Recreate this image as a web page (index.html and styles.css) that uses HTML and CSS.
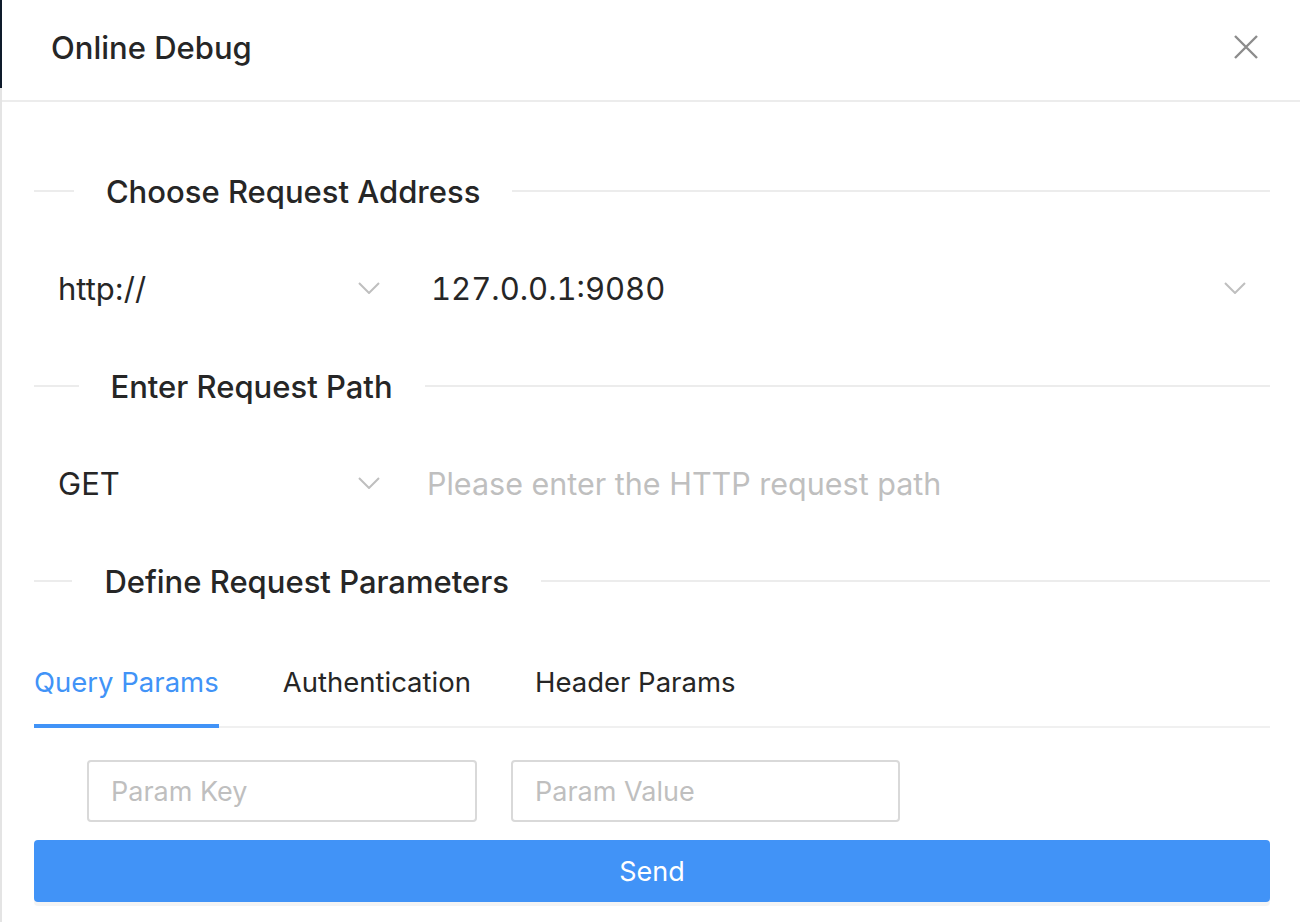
FILE: index.html
```html
<!DOCTYPE html>
<html lang="en">
<head>
<meta charset="utf-8">
<title>Online Debug</title>
<link rel="stylesheet" href="styles.css">
</head>
<body>
<div class="page">
  <div class="behind"><div class="behind-top"></div></div>
  <div class="drawer">
    <div class="drawer-header">
      <div class="drawer-title">Online Debug</div>
      <button class="close" aria-label="Close">
        <svg width="24" height="24" viewBox="0 0 24 24"><path d="M1 1 L23 23 M23 1 L1 23" stroke="#8c8c8c" stroke-width="2.4" fill="none"/></svg>
      </button>
    </div>
    <div class="drawer-body">
      <div class="divider first"><span class="divider-text">Choose Request Address</span></div>
      <div class="field-row">
        <div class="select narrow">
          <span class="select-value">http://</span>
          <svg class="chev" width="22" height="12" viewBox="0 0 22 12"><polyline points="1,1 11,11 21,1" fill="none" stroke="#bfbfbf" stroke-width="2"/></svg>
        </div>
        <div class="select wide">
          <span class="select-value nums">127.0.0.1:9080</span>
          <svg class="chev" width="22" height="12" viewBox="0 0 22 12"><polyline points="1,1 11,11 21,1" fill="none" stroke="#bfbfbf" stroke-width="2"/></svg>
        </div>
      </div>
      <div class="divider"><span class="divider-text">Enter Request Path</span></div>
      <div class="field-row">
        <div class="select narrow">
          <span class="select-value">GET</span>
          <svg class="chev" width="22" height="12" viewBox="0 0 22 12"><polyline points="1,1 11,11 21,1" fill="none" stroke="#bfbfbf" stroke-width="2"/></svg>
        </div>
        <input class="path-input" type="text" placeholder="Please enter the HTTP request path">
      </div>
      <div class="divider"><span class="divider-text">Define Request Parameters</span></div>
      <div class="tabs">
        <div class="tab active">Query Params</div>
        <div class="tab">Authentication</div>
        <div class="tab">Header Params</div>
      </div>
      <div class="params">
        <input class="param-input" type="text" placeholder="Param Key">
        <input class="param-input" type="text" placeholder="Param Value">
      </div>
      <button class="send">Send</button>
    </div>
  </div>
</div>
</body>
</html>
```
FILE: styles.css
```css
html, body {
  margin: 0;
  padding: 0;
  background: #fff;
}
body {
  font-family: "Inter", "Liberation Sans", sans-serif;
  color: #262626;
}
.page {
  display: flex;
  width: 1300px;
  height: 922px;
  overflow: hidden;
}
.behind {
  width: 2px;
  flex: none;
  background: #e4e4e4;
}
.behind-top {
  height: 88px;
  background: #0e1b2b;
}
.drawer {
  flex: 1;
  display: flex;
  flex-direction: column;
  background: #fff;
}
.drawer-header {
  box-sizing: border-box;
  height: 102px;
  border-bottom: 2px solid #ececec;
  display: flex;
  align-items: center;
  justify-content: space-between;
  padding: 0 42px 6px 49px;
}
.drawer-title {
  font-size: 31px;
  font-weight: 500;
  color: #262626;
}
.close {
  border: 0;
  background: none;
  padding: 0;
  width: 24px;
  height: 24px;
  display: flex;
}
.drawer-body {
  padding: 64px 30px 0 32px;
  display: flex;
  flex-direction: column;
}
.divider {
  display: flex;
  align-items: center;
  height: 50px;
  margin-top: 41px;
}
.divider.first {
  margin-top: 0;
}
.divider::before,
.divider::after {
  content: "";
  border-top: 2px solid #ececec;
  flex: 5 1 0;
}
.divider::after {
  flex: 95 1 0;
}
.divider-text {
  padding: 0 32px;
  font-size: 31px;
  font-weight: 500;
  white-space: nowrap;
  color: #262626;
}
.field-row {
  display: flex;
  gap: 3px;
  height: 64px;
  margin-top: 40px;
}
.select {
  display: flex;
  align-items: center;
  justify-content: space-between;
  padding: 0 24px 0 24px;
  font-size: 31px;
  color: #262626;
}
.nums {
  font-variant-numeric: tabular-nums;
}
.select.narrow {
  width: 370px;
  flex: none;
  box-sizing: border-box;
}
.select.wide {
  flex: 1;
}
.chev {
  flex: none;
}
.path-input {
  flex: 1;
  border: 0;
  outline: none;
  padding: 0 22px 0 20px;
  font-family: inherit;
  font-size: 30.5px;
  color: #262626;
  background: transparent;
}
.path-input::placeholder,
.param-input::placeholder {
  color: #bfbfbf;
}
.tabs {
  display: flex;
  gap: 64px;
  margin-top: 30px;
  border-bottom: 2px solid #f0f0f0;
}
.tab {
  font-size: 27.5px;
  line-height: 44px;
  padding: 24px 0 22px;
  color: #262626;
  position: relative;
}
.tab.active {
  color: #4193f7;
}
.tab.active::after {
  content: "";
  position: absolute;
  left: 0;
  right: 0;
  bottom: -2px;
  height: 4px;
  background: #4193f7;
}
.params {
  display: flex;
  gap: 34px;
  padding-left: 53px;
  margin-top: 32px;
}
.param-input {
  box-sizing: border-box;
  width: 390px;
  height: 62px;
  border: 2px solid #d9d9d9;
  border-radius: 4px;
  padding: 0 22px;
  font-family: inherit;
  font-size: 27px;
  color: #262626;
  outline: none;
}
.param-input + .param-input {
  width: 389px;
}
.send {
  margin-top: 18px;
  height: 62px;
  border: 0;
  border-radius: 4px;
  background: #4193f7;
  color: #fff;
  font-family: inherit;
  font-size: 27px;
  box-shadow: 0 4px 0 rgba(0, 0, 0, 0.045);
}
```
